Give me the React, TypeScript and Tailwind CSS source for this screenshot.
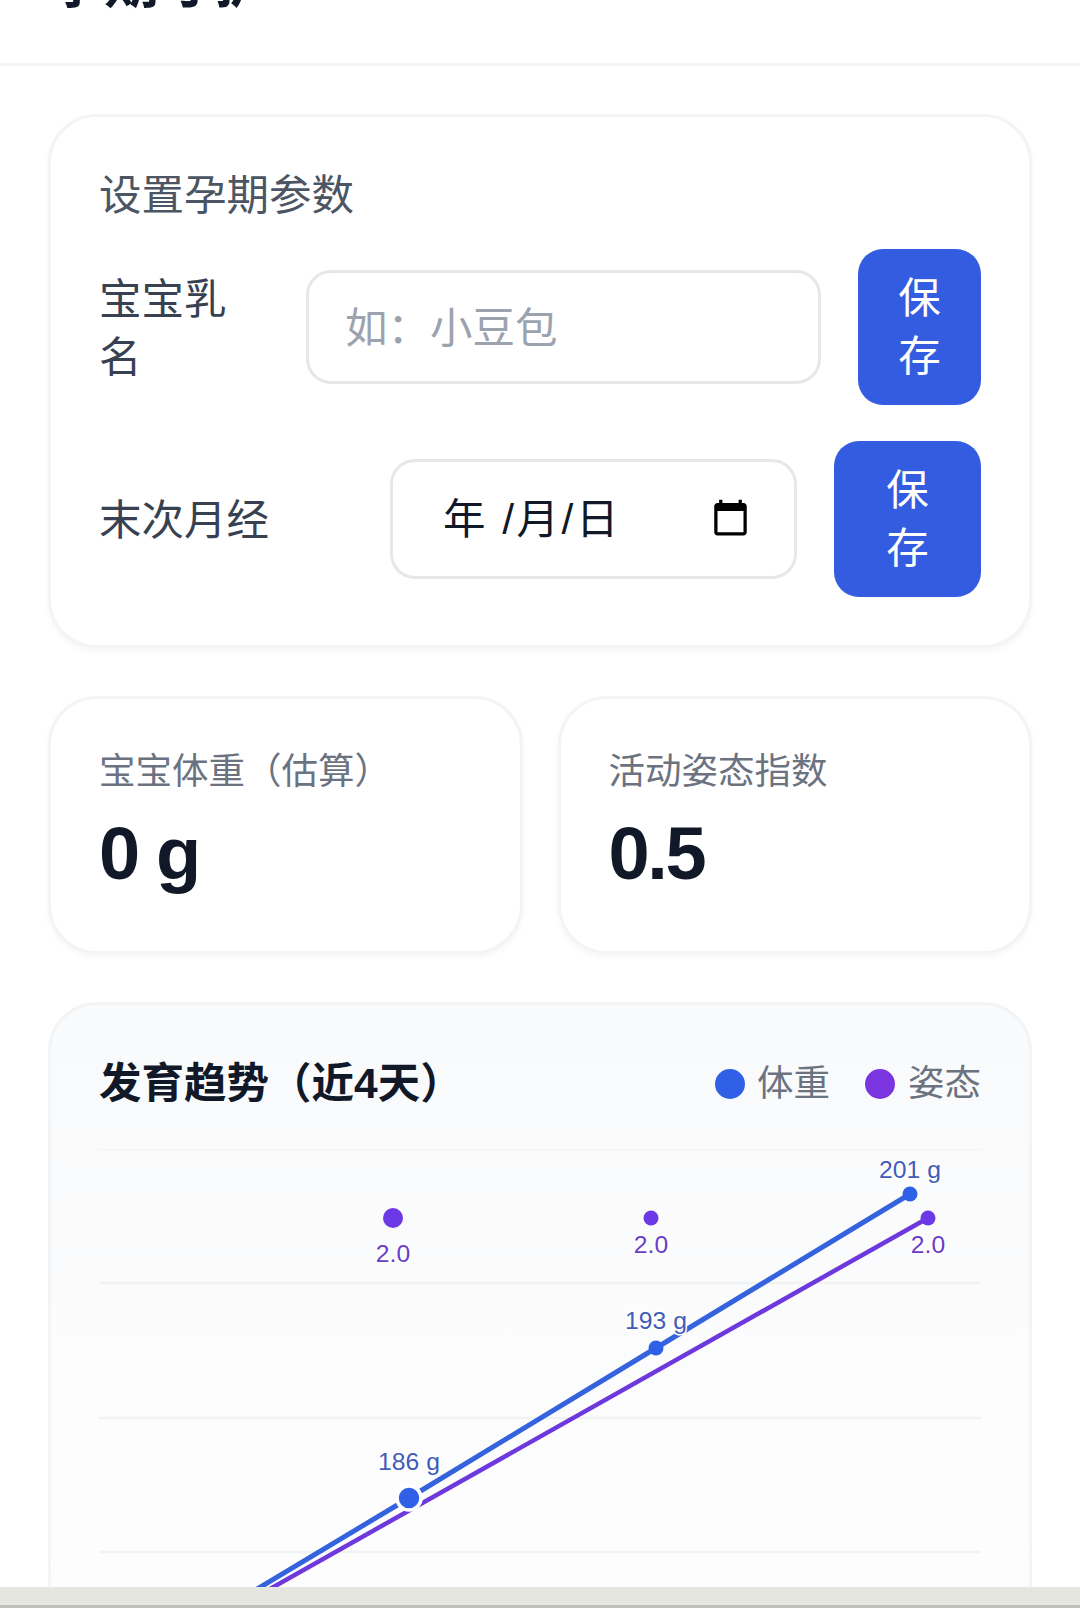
import React from 'react';

const CalendarIcon = () => (
    <svg viewBox="0 0 24 24" className="w-[39px] h-[39px] shrink-0 -mt-[4px]" fill="#000">
        <path d="M20 3h-1V1h-2v2H7V1H5v2H4c-1.1 0-2 .9-2 2v16c0 1.1.9 2 2 2h16c1.1 0 2-.9 2-2V5c0-1.1-.9-2-2-2zm0 18H4V8h16v13z" />
    </svg>
);

const SaveButton = ({ className }: { className: string }) => (
    <button className={`shrink-0 rounded-[25px] bg-[#335ce0] pt-[21px] pb-[19px] text-[42.5px] leading-[58px] text-white text-center ${className}`}>
        保存
    </button>
);

const StatCard = ({ label, value }: { label: string; value: string }) => (
    <div className="flex-1 h-[258px] rounded-[49px] border-[3px] border-[#f3f4f6] bg-white px-[48px] py-[46px] shadow-[0_3px_6px_rgba(0,0,0,0.04)]">
        <div className="text-[36.5px] leading-[53px] text-[#6b7280]">{label}</div>
        <div className="mt-[5px] text-[74px] leading-[101px] font-bold tracking-[-2.4px] text-[#111827]">{value}</div>
    </div>
);

const TrendChart = () => (
    <svg width="882" height="560" className="block mt-[32px] overflow-hidden">
        <line x1="0" y1="0.5" x2="882" y2="0.5" stroke="#f3f4f6" strokeWidth="1.5" />
        <line x1="0" y1="134" x2="882" y2="134" stroke="#f1f2f4" strokeWidth="2.5" />
        <line x1="0" y1="269" x2="882" y2="269" stroke="#f1f2f4" strokeWidth="2.5" />
        <line x1="0" y1="403" x2="882" y2="403" stroke="#f1f2f4" strokeWidth="2.5" />

        <polyline points="829,69 -42,560" fill="none" stroke="#6d38dc" strokeWidth="4.5" />
        <polyline points="811,45 557,199 310,349 -42,560" fill="none" stroke="#3563dd" strokeWidth="5" />

        <circle cx="294" cy="69" r="10" fill="#6d38e6" />
        <circle cx="552" cy="69" r="7.5" fill="#6d38e6" />
        <circle cx="829" cy="69" r="7.5" fill="#6d38e6" />

        <circle cx="310" cy="349" r="12" fill="#3060e6" stroke="#fff" strokeWidth="3.5" />
        <circle cx="557" cy="199" r="7.5" fill="#3060e6" />
        <circle cx="811" cy="45" r="7.5" fill="#3060e6" />

        <g fontSize="24.7" textAnchor="middle" stroke="#fff" strokeWidth="3" paintOrder="stroke">
            <text x="310" y="321" fill="#3f5cb8">186 g</text>
            <text x="557" y="180" fill="#3f5cb8">193 g</text>
            <text x="811" y="29" fill="#3f5cb8">201 g</text>
            <text x="294" y="113" fill="#6a3cc8">2.0</text>
            <text x="552" y="104" fill="#6a3cc8">2.0</text>
            <text x="829" y="104" fill="#6a3cc8">2.0</text>
        </g>
    </svg>
);

export default function App() {
    return (
        <div className="h-[1613px] flex flex-col overflow-hidden bg-white [font-family:'Liberation_Sans','Noto_Sans_CJK_SC',sans-serif]">
            <header className="h-[66px] shrink-0 overflow-hidden border-b-[3px] border-[#f3f4f6] px-[49px]">
                <h1 className="-mt-[54px] text-[55px] leading-[74px] font-bold text-[#111827]">孕期守护</h1>
            </header>

            <main className="flex-1 min-h-0 overflow-hidden px-[48px] pt-[48px] flex flex-col gap-[48px]">
                {/* Settings */}
                <section className="shrink-0 h-[534px] rounded-[49px] border-[3px] border-[#f3f4f6] bg-white px-[48px] py-[46px] shadow-[0_3px_6px_rgba(0,0,0,0.04)]">
                    <h2 className="text-[42.5px] leading-[66px] text-[#4b5563]">设置孕期参数</h2>

                    <div className="mt-[20px] flex items-center gap-[37px]">
                        <label className="w-[170px] shrink-0 pt-[4px] pr-[8px] text-[42.5px] leading-[58px] text-[#374151]">宝宝乳名</label>
                        <input
                            placeholder="如：小豆包"
                            className="min-w-0 flex-1 h-[114px] rounded-[25px] border-[3px] border-[#e5e7eb] bg-white px-[36px] pt-[4px] text-[42.5px] outline-none placeholder:text-[#9ca3af]"
                        />
                        <SaveButton className="w-[123px] px-[37px]" />
                    </div>

                    <div className="mt-[36px] flex items-center gap-[37px]">
                        <label className="w-[254px] shrink-0 pt-[4px] text-[42.5px] leading-[60px] text-[#374151]">末次月经</label>
                        <div className="min-w-0 flex-1 h-[120px] rounded-[25px] border-[3px] border-[#e5e7eb] bg-white pl-[50px] pr-[44px] flex items-center justify-between">
                            <span className="pt-[2px] text-[42.5px] tracking-[2.5px] text-[#111827]">年 /月/日</span>
                            <CalendarIcon />
                        </div>
                        <SaveButton className="w-[147px] px-[49px]" />
                    </div>
                </section>

                {/* Stats */}
                <section className="shrink-0 flex gap-[35px]">
                    <StatCard label="宝宝体重（估算）" value="0 g" />
                    <StatCard label="活动姿态指数" value="0.5" />
                </section>

                {/* Trend */}
                <section className="shrink-0 rounded-[49px] border-[3px] border-[#f3f4f6] bg-gradient-to-b from-[#f9fafb] to-[#fefeff] px-[48px] pt-[46px]">
                    <div className="flex items-center justify-between h-[66px]">
                        <h2 className="text-[42.5px] font-bold text-[#111827]">发育趋势（近4天）</h2>
                        <div className="flex items-center text-[36.5px] text-[#6b7280]">
                            <span className="w-[30px] h-[30px] rounded-full bg-[#3060e6]" />
                            <span className="ml-[12px]">体重</span>
                            <span className="ml-[35px] w-[30px] h-[30px] rounded-full bg-[#7a35e0]" />
                            <span className="ml-[13px]">姿态</span>
                        </div>
                    </div>
                    <TrendChart />
                </section>
            </main>

            <div className="shrink-0 h-[21px] bg-[#e5e6df] border-b-[3px] border-[#bfc0ba]" />
            <div className="shrink-0 h-[5px] bg-white" />
        </div>
    );
}
